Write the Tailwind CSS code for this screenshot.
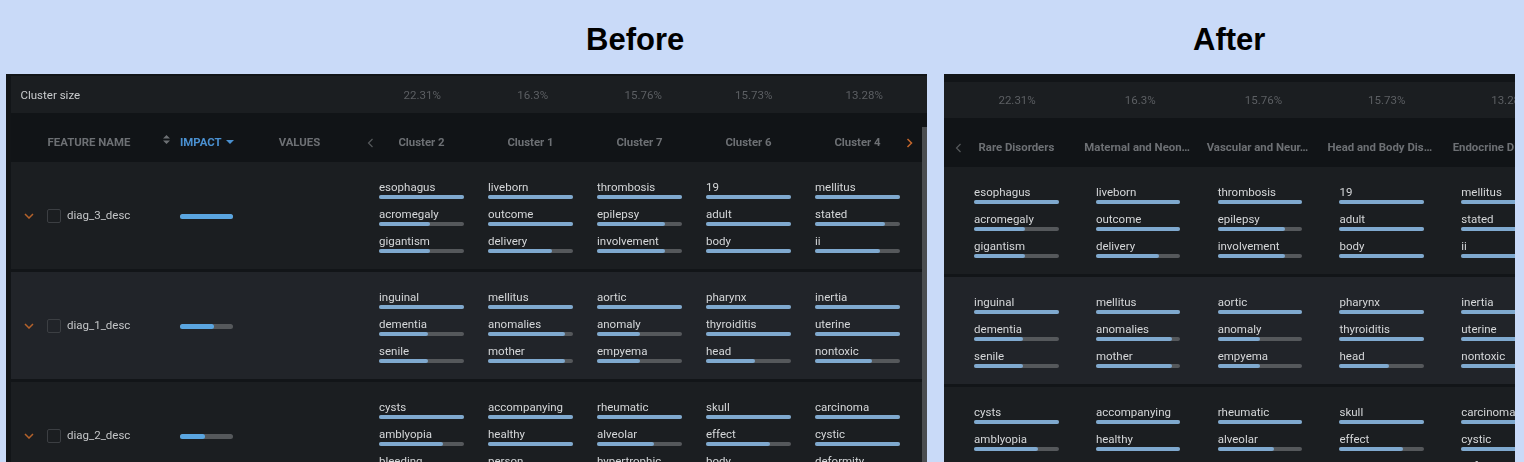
<!DOCTYPE html>
<html lang="en">
<head>
	<meta charset="UTF-8">
	<title>Before / After</title>
	<script src="https://cdn.jsdelivr.net/npm/@tailwindcss/browser@4"></script>
</head>
<body class="h-[462px] w-[1524px] overflow-hidden bg-[#c9daf8] font-['Roboto',sans-serif]">

<div class="flex h-[74px]">
	<h1 class="w-[1193px] pl-[586px] pt-[22px] font-['Liberation_Sans',sans-serif] text-[31px] leading-9 font-bold text-black">Before</h1>
	<h1 class="pt-[22px] font-['Liberation_Sans',sans-serif] text-[31px] leading-9 font-bold text-black">After</h1>
</div>

<div class="flex items-start blur-[0.35px]">
	<!-- Before -->
	<section class="relative ml-[6px] h-[388px] w-[921px] overflow-hidden bg-[#121518] pt-[2px] pl-[5px]">
		<div id="beforeSize" class="flex h-[37px] items-center bg-[#1b1e21] pt-[2px]">
			<div class="w-[356px] pl-[9.5px] text-[11.5px] text-[#c9cbcd]">Cluster size</div>
		</div>
		<div id="beforeHead" class="flex h-[49px] items-center bg-[#111417] pt-[10px] text-[11.4px] font-bold">
			<div class="w-[169px] pl-[36.5px] text-[#6d7074]">FEATURE NAME</div>
			<div class="flex w-[187px] items-center text-[#4a90d0]">
				<svg class="-ml-[17px] mr-[10px] -mt-[5px] shrink-0" width="7" height="9" viewBox="0 0 7 9"><path d="M3.5 0 7 3.5H0zM3.5 9 0 5.5h7z" fill="#6d7074"/></svg>
				<span>IMPACT</span>
				<svg class="ml-[4px] shrink-0" width="8" height="4" viewBox="0 0 8 4"><path d="M0 0h8L4 4z" fill="#4a90d0"/></svg>
				<span class="ml-[45px] text-[#6d7074]">VALUES</span>
			</div>
		</div>
		<div id="beforeRows" class="flex flex-col gap-[3px]"></div>
		<div class="absolute right-0 top-[53px] bottom-0 w-[5px] bg-[#4a4d50]"></div>
	</section>

	<!-- After -->
	<section class="ml-[17px] h-[388px] w-[571px] overflow-hidden bg-[#121518] pt-[8px]">
		<div id="afterSize" class="flex h-[36px] items-center bg-[#1b1e21] pt-[2px] pl-[11.5px]"></div>
		<div id="afterHead" class="flex h-[49px] items-center bg-[#111417] pt-[10px] pl-[11.5px] text-[11.4px] font-bold"></div>
		<div id="afterRows" class="flex flex-col gap-[3px]"></div>
	</section>
</div>

<script>
	const sizes = ['22.31%', '16.3%', '15.76%', '15.73%', '13.28%'];
	const features = [
		{ name: 'diag_3_desc', impact: 100, cols: [
			[['esophagus', 100], ['acromegaly', 60], ['gigantism', 60]],
			[['liveborn', 100], ['outcome', 100], ['delivery', 75]],
			[['thrombosis', 100], ['epilepsy', 80], ['involvement', 80]],
			[['19', 100], ['adult', 100], ['body', 100]],
			[['mellitus', 100], ['stated', 82], ['ii', 76]],
		] },
		{ name: 'diag_1_desc', impact: 64, cols: [
			[['inguinal', 100], ['dementia', 58], ['senile', 58]],
			[['mellitus', 100], ['anomalies', 90], ['mother', 90]],
			[['aortic', 100], ['anomaly', 50], ['empyema', 50]],
			[['pharynx', 100], ['thyroiditis', 100], ['head', 58]],
			[['inertia', 100], ['uterine', 100], ['nontoxic', 67]],
		] },
		{ name: 'diag_2_desc', impact: 48, cols: [
			[['cysts', 100], ['amblyopia', 75], ['bleeding', 60]],
			[['accompanying', 100], ['healthy', 100], ['person', 80]],
			[['rheumatic', 100], ['alveolar', 67], ['hypertrophic', 60]],
			[['skull', 100], ['effect', 75], ['body', 70]],
			[['carcinoma', 100], ['cystic', 100], ['deformity', 70]],
		] },
	];

	const chevronLeft = '<svg class="shrink-0" width="7" height="10" viewBox="0 0 7 10"><path d="M5.5 1 1.5 5l4 4" fill="none" stroke="#56595c" stroke-width="1.2"/></svg>';
	const chevronRight = '<svg class="shrink-0" width="7" height="10" viewBox="0 0 7 10"><path d="M1.5 1l4 4-4 4" fill="none" stroke="#c5672c" stroke-width="1.5"/></svg>';
	const chevronDown = '<svg class="shrink-0" width="10" height="6" viewBox="0 0 10 6"><path d="M1 1l4 4 4-4" fill="none" stroke="#b5622b" stroke-width="1.5"/></svg>';

	function wordCell(items, colClass, barClass) {
		const rows = items.map(([word, pct]) => `
			<div class="h-[20px]">
				<div class="h-[16px] text-[11.5px] leading-[16px] whitespace-nowrap text-[#d5d7d9]">${word}</div>
				<div class="h-[4px] ${barClass} rounded-full bg-[#55585b]"><div class="h-full rounded-full bg-[#7fa9cf]" style="width:${pct}%"></div></div>
			</div>`).join('');
		return `<div class="flex ${colClass} shrink-0 flex-col gap-[7px]">${rows}</div>`;
	}

	function sizeCells(colClass) {
		return sizes.map(s => `<div class="${colClass} shrink-0 text-center text-[11.5px] text-[#5c5f63]">${s}</div>`).join('');
	}

	// Before
	document.getElementById('beforeSize').insertAdjacentHTML('beforeend', sizeCells('w-[110.5px]'));
	document.getElementById('beforeHead').insertAdjacentHTML('beforeend',
		`<div class="flex w-[0px]">${chevronLeft}</div>` +
		['Cluster 2', 'Cluster 1', 'Cluster 7', 'Cluster 6', 'Cluster 4'].map(c =>
			`<div class="w-[109px] shrink-0 text-center text-[#6d7074]">${c}</div>`).join('') +
		`<div class="ml-[-6px]">${chevronRight}</div>`);
	document.getElementById('beforeRows').innerHTML = features.map((f, i) => `
		<div class="flex h-[107px] items-center ${i === 1 ? 'bg-[#212429]' : 'bg-[#1b1e21]'}">
			<div class="mt-[1px] flex w-[169px] items-center pl-[13px]">
				${chevronDown}
				<span class="ml-[13px] h-[14px] w-[14px] rounded-[2px] border border-[#3c3f43]"></span>
				<span class="ml-[6px] text-[11.5px] text-[#c4c6c8]">${f.name}</span>
			</div>
			<div class="mt-[1px] h-[5px] w-[53px] rounded-full bg-[#55585b]"><div class="h-full rounded-full bg-[#5aa5e0]" style="width:${f.impact}%"></div></div>
			<div class="w-[134px]"></div>
			${f.cols.map(c => wordCell(c, 'w-[109px] pl-[12px]', 'w-[85px]')).join('')}
		</div>`).join('');

	// After
	document.getElementById('afterSize').innerHTML = sizeCells('w-[123.2px]');
	document.getElementById('afterHead').innerHTML =
		`<div class="flex w-[0px] translate-x-[-1px]">${chevronLeft}</div>` +
		[['Rare Disorders', ''], ['Maternal and Neon…', 'pr-[2px]'], ['Vascular and Neur…', 'pr-[5px]'], ['Head and Body Dis…', 'pr-[4px]'], ['Endocrine Disorde…', '']].map(([c, nudge]) =>
			`<div class="w-[121.8px] shrink-0 ${nudge} text-center whitespace-nowrap text-[#6d7074]">${c}</div>`).join('');
	document.getElementById('afterRows').innerHTML = features.map((f, i) => `
		<div class="flex h-[107px] items-center pl-[11.5px] ${i === 1 ? 'bg-[#212429]' : 'bg-[#1b1e21]'}">
			${f.cols.map(c => wordCell(c, 'w-[121.8px] pl-[18.6px]', 'w-[84.6px]')).join('')}
		</div>`).join('');
</script>
</body>
</html>
